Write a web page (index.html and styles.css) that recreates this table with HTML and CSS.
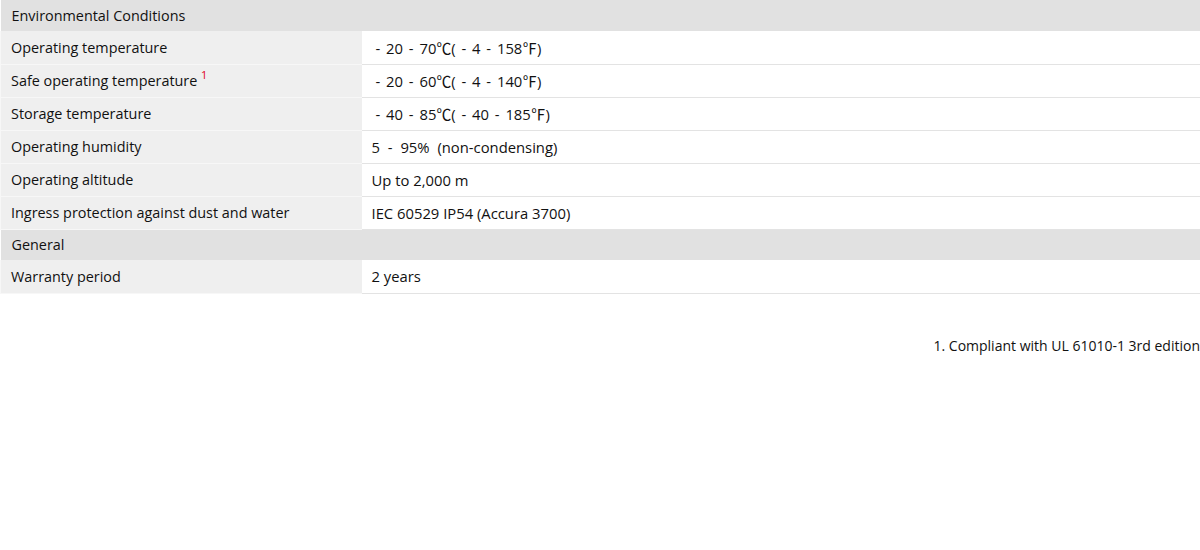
FILE: index.html
```html
<!DOCTYPE html>
<html lang="en">
<head>
  <meta charset="UTF-8" />
  <title>Specifications</title>
  <link rel="stylesheet" href="styles.css">
</head>
<body>

  <table class="spec-table">
    <tr class="group">
      <th colspan="2">Environmental Conditions</th>
    </tr>
    <tr>
      <td class="label">Operating temperature</td>
      <td class="value temp">- 20 - 70℃( - 4 - 158℉)</td>
    </tr>
    <tr>
      <td class="label">Safe operating temperature <sup class="note">1</sup></td>
      <td class="value temp">- 20 - 60℃( - 4 - 140℉)</td>
    </tr>
    <tr>
      <td class="label">Storage temperature</td>
      <td class="value temp">- 40 - 85℃( - 40 - 185℉)</td>
    </tr>
    <tr>
      <td class="label">Operating humidity</td>
      <td class="value range">5 - 95% (non-condensing)</td>
    </tr>
    <tr>
      <td class="label">Operating altitude</td>
      <td class="value">Up to 2,000 m</td>
    </tr>
    <tr>
      <td class="label">Ingress protection against dust and water</td>
      <td class="value">IEC 60529 IP54 (Accura 3700)</td>
    </tr>
    <tr class="group">
      <th colspan="2">General</th>
    </tr>
    <tr>
      <td class="label">Warranty period</td>
      <td class="value">2 years</td>
    </tr>
  </table>

  <p class="footnote">1. Compliant with UL 61010-1 3rd edition</p>

</body>
</html>
```

FILE: styles.css
```css
:root {
  --text-color: #111111;
  --group-bg: #e1e1e1;
  --label-bg: #efefef;
  --line-color: #e3e3e3;
}

body {
  margin: 0;
  padding: 0;
  background: #ffffff;
  color: var(--text-color);
  font-family: 'Open Sans', 'Noto Sans CJK KR', sans-serif;
  font-size: 14.4px;
}

.spec-table {
  width: 100%;
  border-collapse: collapse;
}

.spec-table th {
  background: var(--group-bg);
  text-align: left;
  font-weight: 400;
  height: 31px;
  padding: 0 11px;
  box-sizing: border-box;
}

.spec-table td {
  height: 33px;
  box-sizing: border-box;
  border-bottom: 1px solid var(--line-color);
  padding: 0 10px;
}

.spec-table td.label {
  width: 361px;
  background: var(--label-bg);
  border-left: 1px solid #f7f7f7;
  border-bottom-color: #f7f7f7;
  padding-left: 10px;
}

.spec-table td.value {
  font-size: 14.8px;
}

.value.temp {
  padding-left: 14px;
  word-spacing: 2px;
}

.value.range {
  word-spacing: 4px;
}

.note {
  color: #e0001a;
  font-size: 11px;
  vertical-align: 7px;
  line-height: 0;
}

.footnote {
  margin: 42px 0 0;
  text-align: right;
  font-size: 14px;
}
```
